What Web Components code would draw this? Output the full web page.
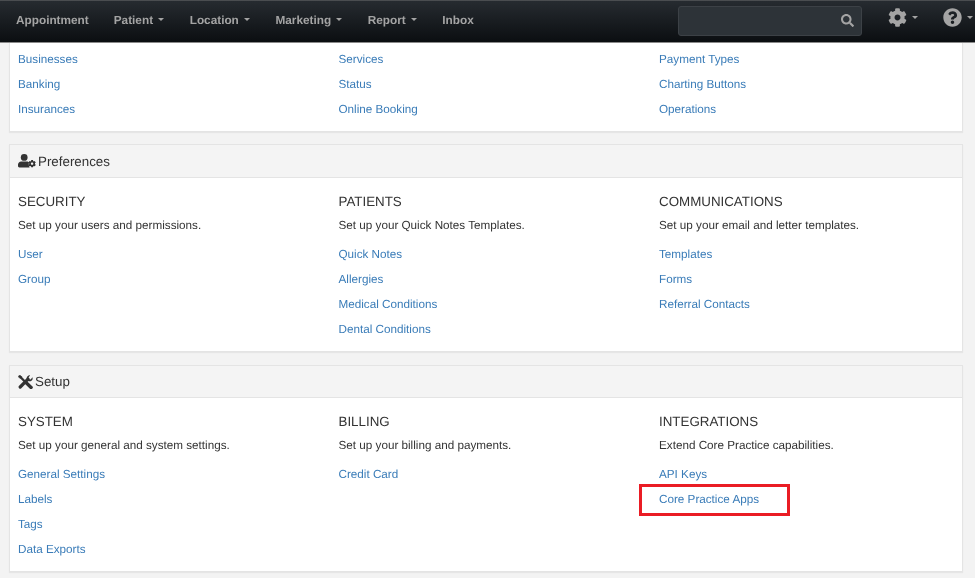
<!DOCTYPE html>
<html>
<head>
<meta charset="utf-8">
<title>Settings</title>
<style>
    html, body{
        margin: 0;
        height: 578px;
        overflow: hidden;
        background-color: #f3f3f3;
        font-family: "Liberation Sans", Arial, sans-serif;
        text-rendering: geometricPrecision;
        color: #333;
    }
    .page{
        display: flex;
        flex-direction: column;
        gap: 12px;
        padding: 0 12px 0 9px;
        filter: blur(.3px);
    }
    .page settings-panel:nth-child(3){
        margin-top: 1px;
    }
</style>
</head>
<body>
<app-navbar>
    <nav-item>Appointment</nav-item>
    <nav-item caret>Patient</nav-item>
    <nav-item caret>Location</nav-item>
    <nav-item caret>Marketing</nav-item>
    <nav-item caret>Report</nav-item>
    <nav-item>Inbox</nav-item>
</app-navbar>
<div class="page">
    <settings-panel headless>
        <settings-col>
            <panel-link>Businesses</panel-link>
            <panel-link>Banking</panel-link>
            <panel-link>Insurances</panel-link>
        </settings-col>
        <settings-col>
            <panel-link>Services</panel-link>
            <panel-link>Status</panel-link>
            <panel-link>Online Booking</panel-link>
        </settings-col>
        <settings-col>
            <panel-link>Payment Types</panel-link>
            <panel-link>Charting Buttons</panel-link>
            <panel-link>Operations</panel-link>
        </settings-col>
    </settings-panel>
    <settings-panel heading="Preferences" icon="user-cog" headheight="33">
        <settings-col heading="SECURITY" text="Set up your users and permissions.">
            <panel-link>User</panel-link>
            <panel-link>Group</panel-link>
        </settings-col>
        <settings-col heading="PATIENTS" text="Set up your Quick Notes Templates.">
            <panel-link>Quick Notes</panel-link>
            <panel-link>Allergies</panel-link>
            <panel-link>Medical Conditions</panel-link>
            <panel-link>Dental Conditions</panel-link>
        </settings-col>
        <settings-col heading="COMMUNICATIONS" text="Set up your email and letter templates.">
            <panel-link>Templates</panel-link>
            <panel-link>Forms</panel-link>
            <panel-link>Referral Contacts</panel-link>
        </settings-col>
    </settings-panel>
    <settings-panel heading="Setup" icon="tools">
        <settings-col heading="SYSTEM" text="Set up your general and system settings.">
            <panel-link>General Settings</panel-link>
            <panel-link>Labels</panel-link>
            <panel-link>Tags</panel-link>
            <panel-link>Data Exports</panel-link>
        </settings-col>
        <settings-col heading="BILLING" text="Set up your billing and payments.">
            <panel-link>Credit Card</panel-link>
        </settings-col>
        <settings-col heading="INTEGRATIONS" text="Extend Core Practice capabilities.">
            <panel-link>API Keys</panel-link>
            <panel-link marked>Core Practice Apps</panel-link>
        </settings-col>
    </settings-panel>
</div>
<script>
const COG = 'M487.4 315.7l-42.6-24.6c4.3-23.2 4.3-47 0-70.2l42.6-24.6c4.9-2.8 7.1-8.6 5.5-14-11.1-35.6-30-67.8-54.7-94.6-3.8-4.1-10-5.1-14.8-2.3L380.8 110c-17.9-15.4-38.5-27.3-60.8-35.1V25.8c0-5.6-3.9-10.5-9.4-11.7-36.7-8.2-74.3-7.8-109.2 0-5.5 1.2-9.4 6.1-9.4 11.7V75c-22.2 7.9-42.8 19.8-60.8 35.1L88.7 85.5c-4.9-2.8-11-1.9-14.8 2.3-24.7 26.7-43.6 58.9-54.7 94.6-1.7 5.4.6 11.2 5.5 14L67.3 221c-4.3 23.2-4.3 47 0 70.2l-42.6 24.6c-4.9 2.8-7.1 8.6-5.5 14 11.1 35.6 30 67.8 54.7 94.6 3.8 4.1 10 5.1 14.8 2.3l42.6-24.6c17.9 15.4 38.5 27.3 60.8 35.1v49.2c0 5.6 3.9 10.5 9.4 11.7 36.7 8.2 74.3 7.8 109.2 0 5.5-1.2 9.4-6.1 9.4-11.7v-49.2c22.2-7.9 42.8-19.8 60.8-35.1l42.6 24.6c4.9 2.8 11 1.9 14.8-2.3 24.7-26.7 43.6-58.9 54.7-94.6 1.5-5.5-.7-11.3-5.6-14.1zM256 336c-44.1 0-80-35.9-80-80s35.9-80 80-80 80 35.9 80 80-35.9 80-80 80z';
const SEARCH = 'M505 442.7L405.3 343c-4.5-4.5-10.6-7-17-7H372c27.6-35.3 44-79.7 44-128C416 93.1 322.9 0 208 0S0 93.1 0 208s93.1 208 208 208c48.3 0 92.7-16.4 128-44v16.3c0 6.4 2.5 12.5 7 17l99.7 99.7c9.4 9.4 24.6 9.4 33.9 0l28.3-28.3c9.4-9.4 9.4-24.6.1-34zM208 336c-70.7 0-128-57.2-128-128 0-70.7 57.2-128 128-128 70.7 0 128 57.2 128 128 0 70.7-57.2 128-128 128z';
const QUESTION = 'M504 256c0 136.997-111.043 248-248 248S8 392.997 8 256C8 119.083 119.043 8 256 8s248 111.083 248 248zM262.655 90c-54.497 0-89.255 22.957-116.549 63.758-3.536 5.286-2.353 12.415 2.715 16.258l34.699 26.31c5.205 3.947 12.621 3.008 16.665-2.122 17.864-22.658 30.113-35.797 57.303-35.797 20.429 0 45.698 13.148 45.698 32.958 0 14.976-12.363 22.667-32.534 33.976C247.128 238.528 216 254.941 216 296v4c0 6.627 5.373 12 12 12h56c6.627 0 12-5.373 12-12v-1.333c0-28.462 83.186-29.647 83.186-106.667 0-58.002-60.165-102-116.531-102zM256 338c-25.365 0-46 20.635-46 46 0 25.364 20.635 46 46 46s46-20.636 46-46c0-25.365-20.635-46-46-46z';

const ICONS = {
    'user-cog': `<svg width="18" height="14" viewBox="0 0 18 14" fill="#333">
        <circle cx="6.2" cy="3.4" r="3.4"/>
        <path d="M3.2 7.4h5.6c1 0 1.8.4 2.2 1-.5 1.6-.2 3.2.6 5H1.4C.6 13.4 0 12.8 0 12v-1.4C0 8.8 1.4 7.4 3.2 7.4z"/>
        <svg x="10.2" y="5.8" width="7.8" height="7.8" viewBox="0 0 512 512"><path d="${COG}"/></svg>
    </svg>`,
    'tools': `<svg width="15" height="14" viewBox="0 0 15 14" fill="none" stroke="#333" stroke-linecap="round">
        <path d="M2 1.6L7.6 7.2" stroke-width="2.2"/>
        <path d="M.3 1.4L1.6.2l2.2 1.6-1.2 1.3z" fill="#333" stroke-width=".6"/>
        <path d="M8.2 7.8l4.9 4.6" stroke-width="3.4"/>
        <path d="M2.2 12L10 4.2" stroke-width="3.2"/>
        <path d="M14.5 2.2c.5 1.7-.1 3.4-1.8 4-1.6.5-3.4-.3-3.9-1.9-.5-1.6.2-3.3 1.8-3.9.5-.2 1-.2 1.5-.1L10.6 2.6l.4 1.6 1.6.4z" fill="#333" stroke="none"/>
    </svg>`
};

window.customElements.define('nav-item', class NavItem extends HTMLElement{
    constructor(){
        super();
        this.attachShadow({ mode: 'open' });
    }
    connectedCallback(){
        this.shadowRoot.innerHTML = `
        <style>
            :host{
                display: inline-flex;
                align-items: center;
                gap: 5px;
                color: #a4a4a4;
                font-size: 11.8px;
                font-weight: bold;
            }
            :host([caret]){
                padding-right: .6px;
            }
            .caret{
                width: 0;
                height: 0;
                border-top: 3.5px solid #a4a4a4;
                border-left: 3.5px solid transparent;
                border-right: 3.5px solid transparent;
            }
        </style>
        <slot></slot>${this.hasAttribute('caret') ? '<span class="caret"></span>' : ''}`;
    }
});

window.customElements.define('app-navbar', class AppNavbar extends HTMLElement{
    constructor(){
        super();
        this.attachShadow({ mode: 'open' });
    }
    connectedCallback(){
        this.shadowRoot.innerHTML = `
        <style>
            :host{
                display: flex;
                align-items: center;
                box-sizing: border-box;
                height: 43px;
                padding: 0 2px 2px 16px;
                background: linear-gradient(#262b30, #0b0e11);
                border-top: 1px solid #4a4d50;
                border-bottom: 1px solid #8a8a8a;
                filter: blur(.3px);
            }
            .items{
                display: flex;
                align-items: center;
                gap: 25px;
                flex: 1;
                margin-top: -2px;
            }
            .search{
                display: flex;
                align-items: center;
                justify-content: flex-end;
                box-sizing: border-box;
                width: 184px;
                height: 30px;
                padding-right: 7px;
                background-color: #2d3338;
                border: 1px solid #3c4146;
                border-radius: 3px;
            }
            .tool{
                display: flex;
                align-items: center;
                gap: 5px;
                margin-top: -7px;
            }
            .caret{
                width: 0;
                height: 0;
                border-top: 3.5px solid #a4a4a4;
                border-left: 3.5px solid transparent;
                border-right: 3.5px solid transparent;
            }
            .gear{ margin-left: 26px; }
            .help{ margin-left: 25px; }
        </style>
        <div class="items"><slot></slot></div>
        <div class="search">
            <svg width="13" height="13" viewBox="0 0 512 512" fill="#a4a4a4"><path d="${SEARCH}"/></svg>
        </div>
        <div class="tool gear">
            <svg width="19" height="19" viewBox="0 0 512 512" fill="#a4a4a4"><path d="${COG}"/></svg>
            <span class="caret"></span>
        </div>
        <div class="tool help">
            <svg width="19" height="19" viewBox="0 0 512 512" fill="#a4a4a4"><path d="${QUESTION}"/></svg>
            <span class="caret"></span>
        </div>`;
    }
});

window.customElements.define('panel-link', class PanelLink extends HTMLElement{
    constructor(){
        super();
        this.attachShadow({ mode: 'open' });
    }
    connectedCallback(){
        this.shadowRoot.innerHTML = `
        <style>
            :host{
                display: block;
                position: relative;
                height: 25px;
                line-height: 25px;
                font-size: 11.7px;
                color: #3a7cb8;
            }
            .mark{
                position: absolute;
                left: -20px;
                top: -3.5px;
                width: 151px;
                height: 32px;
                box-sizing: border-box;
                border: 3px solid #ea1c24;
            }
        </style>
        <slot></slot>${this.hasAttribute('marked') ? '<span class="mark"></span>' : ''}`;
    }
});

window.customElements.define('settings-col', class SettingsCol extends HTMLElement{
    constructor(){
        super();
        this.attachShadow({ mode: 'open' });
    }
    connectedCallback(){
        const heading = this.getAttribute('heading');
        this.shadowRoot.innerHTML = `
        <style>
            :host{
                display: block;
            }
            h4{
                margin: 0;
                height: 24px;
                line-height: 24px;
                font-size: 13.35px;
                font-weight: normal;
                color: #333;
            }
            p{
                margin: 0 0 4px;
                height: 24px;
                line-height: 24px;
                font-size: 11.7px;
                color: #333;
            }
        </style>
        ${heading ? `<h4>${heading}</h4><p>${this.getAttribute('text')}</p>` : ''}
        <slot></slot>`;
    }
});

window.customElements.define('settings-panel', class SettingsPanel extends HTMLElement{
    constructor(){
        super();
        this.attachShadow({ mode: 'open' });
    }
    connectedCallback(){
        const heading = this.getAttribute('heading');
        const headless = this.hasAttribute('headless');
        this.shadowRoot.innerHTML = `
        <style>
            :host{
                display: block;
                background-color: white;
                border: 1px solid #e4e4e4;
                box-shadow: 0 1px 1px rgba(0, 0, 0, .05);
                ${headless ? 'border-top: 0;' : ''}
            }
            .head{
                display: flex;
                align-items: center;
                gap: 2px;
                box-sizing: border-box;
                height: ${this.getAttribute('headheight') || 32}px;
                padding: 0 8px;
                background-color: #f4f4f4;
                border-bottom: 1px solid #e4e4e4;
                font-size: 13.35px;
                color: #333;
            }
            .body{
                display: grid;
                grid-template-columns: repeat(3, 320.5px);
                padding: ${headless ? '4px 8px 9px' : '12px 8px 9px'};
            }
        </style>
        ${heading ? `<div class="head">${ICONS[this.getAttribute('icon')]}<span>${heading}</span></div>` : ''}
        <div class="body"><slot></slot></div>`;
    }
});
</script>
</body>
</html>
